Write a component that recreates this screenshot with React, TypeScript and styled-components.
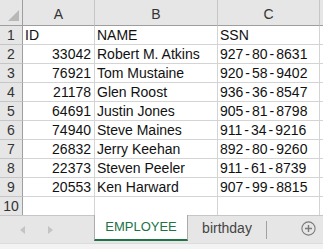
import React from "react";
import styled, { createGlobalStyle } from "styled-components";

type RowType = {
  id: string;
  name: string;
  ssn: string;
};

const rows: RowType[] = [
  { id: "ID", name: "NAME", ssn: "SSN" },
  { id: "33042", name: "Robert M. Atkins", ssn: "927-80-8631" },
  { id: "76921", name: "Tom Mustaine", ssn: "920-58-9402" },
  { id: "21178", name: "Glen Roost", ssn: "936-36-8547" },
  { id: "64691", name: "Justin Jones", ssn: "905-81-8798" },
  { id: "74940", name: "Steve Maines", ssn: "911-34-9216" },
  { id: "26832", name: "Jerry Keehan", ssn: "892-80-9260" },
  { id: "22373", name: "Steven Peeler", ssn: "911-61-8739" },
  { id: "20553", name: "Ken Harward", ssn: "907-99-8815" },
  { id: "", name: "", ssn: "" },
];

const GlobalStyle = createGlobalStyle`
  html, body {
    margin: 0;
    padding: 0;
    background: #fff;
    font-family: "Liberation Sans", Arial, sans-serif;
  }
`;

const App = () => {
  return (
    <>
      <GlobalStyle />
      <SWindow>
        <SGrid>
          <SCorner>
            <svg width="12" height="12" viewBox="0 0 12 12">
              <polygon points="11,0 11,11 0,11" fill="#b8b8b8" />
            </svg>
          </SCorner>
          <SColHead>A</SColHead>
          <SColHead>B</SColHead>
          <SColHead>C</SColHead>
          <SColHead $last />
          {rows.map((row, i) => (
            <React.Fragment key={i}>
              <SRowHead>{i + 1}</SRowHead>
              <SCell $align={i === 0 ? "left" : "right"}>{row.id}</SCell>
              <SCell>{row.name}</SCell>
              <SCell>
                {row.ssn.split("-").map((part, j) => (
                  <React.Fragment key={j}>
                    {j > 0 && <SDash>-</SDash>}
                    {part}
                  </React.Fragment>
                ))}
              </SCell>
              <SCell $last />
            </React.Fragment>
          ))}
        </SGrid>
        <STabBar>
          <SNav>
            <svg width="5" height="8" viewBox="0 0 5 8">
              <polygon points="5,0 5,8 0,4" fill="#c4c4c4" />
            </svg>
            <svg width="5" height="8" viewBox="0 0 5 8">
              <polygon points="0,0 0,8 5,4" fill="#c4c4c4" />
            </svg>
          </SNav>
          <STab $active>EMPLOYEE</STab>
          <STab>birthday</STab>
          <SDivider />
          <SAdd>
            <svg width="15" height="15" viewBox="0 0 15 15">
              <circle cx="7.5" cy="7.5" r="6.6" fill="none" stroke="#7a7a7a" strokeWidth="1.1" />
              <path d="M7.5 4v7M4 7.5h7" stroke="#7a7a7a" strokeWidth="1.4" />
            </svg>
          </SAdd>
        </STabBar>
        <SStatus />
      </SWindow>
    </>
  );
};

const SWindow = styled.div`
  width: 323px;
  height: 249px;
  overflow: hidden;
  display: flex;
  flex-direction: column;
  background: #fff;
`;

const SGrid = styled.div`
  display: grid;
  grid-template-columns: 23px 72px 123px 102px 1fr;
  grid-template-rows: 26px repeat(10, 19px);
`;

const SCorner = styled.div`
  background: #e6e6e6;
  border-right: 1px solid #9e9e9e;
  border-bottom: 1px solid #9e9e9e;
  display: flex;
  align-items: flex-end;
  justify-content: flex-end;
  padding: 0 2px 3px 0;
`;

const SColHead = styled.div<{ $last?: boolean }>`
  background: #e6e6e6;
  border-right: ${(p) => (p.$last ? "none" : "1px solid #c6c6c6")};
  border-bottom: 1px solid #9e9e9e;
  display: flex;
  align-items: flex-end;
  justify-content: center;
  padding-bottom: 3px;
  font-size: 14px;
  color: #333;
`;

const SRowHead = styled.div`
  background: #e6e6e6;
  border-right: 1px solid #9e9e9e;
  border-bottom: 1px solid #c6c6c6;
  display: flex;
  align-items: flex-end;
  justify-content: center;
  font-size: 14px;
  line-height: 17px;
  color: #333;
`;

const SCell = styled.div<{ $align?: "left" | "right"; $last?: boolean }>`
  border-right: ${(p) => (p.$last ? "none" : "1px solid #d4d4d4")};
  border-bottom: 1px solid #d4d4d4;
  display: flex;
  align-items: flex-end;
  justify-content: ${(p) => (p.$align === "right" ? "flex-end" : "flex-start")};
  padding: 0 3px 0 2px;
  font-size: 14px;
  line-height: 17px;
  color: #111;
  white-space: nowrap;
  overflow: hidden;
`;

const SDash = styled.span`
  margin: 0 2px;
`;

const STabBar = styled.div`
  height: 27px;
  background: #e6e6e6;
  display: flex;
  align-items: stretch;
  margin-top: -1px;
  border-top: 1px solid #c6c6c6;
`;

const SNav = styled.div`
  width: 94px;
  display: flex;
  align-items: center;
  gap: 23px;
  padding-left: 20px;
  box-sizing: border-box;
`;

const STab = styled.div<{ $active?: boolean }>`
  width: ${(p) => (p.$active ? "94px" : "78px")};
  box-sizing: border-box;
  display: flex;
  align-items: center;
  justify-content: center;
  font-size: ${(p) => (p.$active ? "13px" : "14px")};
  color: ${(p) => (p.$active ? "#217346" : "#444")};
  background: ${(p) => (p.$active ? "#fff" : "transparent")};
  border-left: ${(p) => (p.$active ? "1px solid #ababab" : "none")};
  border-right: ${(p) => (p.$active ? "1px solid #ababab" : "none")};
  border-bottom: ${(p) => (p.$active ? "2px solid #217346" : "none")};
  margin-top: -1px;
  margin-bottom: 2px;
  padding-bottom: 1px;
`;

const SDivider = styled.div`
  width: 1px;
  background: #a0a0a0;
  margin: 5px 0 4px;
`;

const SAdd = styled.div`
  flex: 1;
  display: flex;
  align-items: center;
  justify-content: center;
  padding-left: 26px;
  padding-bottom: 2px;
`;

const SStatus = styled.div`
  flex: 1;
  background: #f3f3f3;
  border-top: 1px solid #dcdcdc;
`;

export default App;
